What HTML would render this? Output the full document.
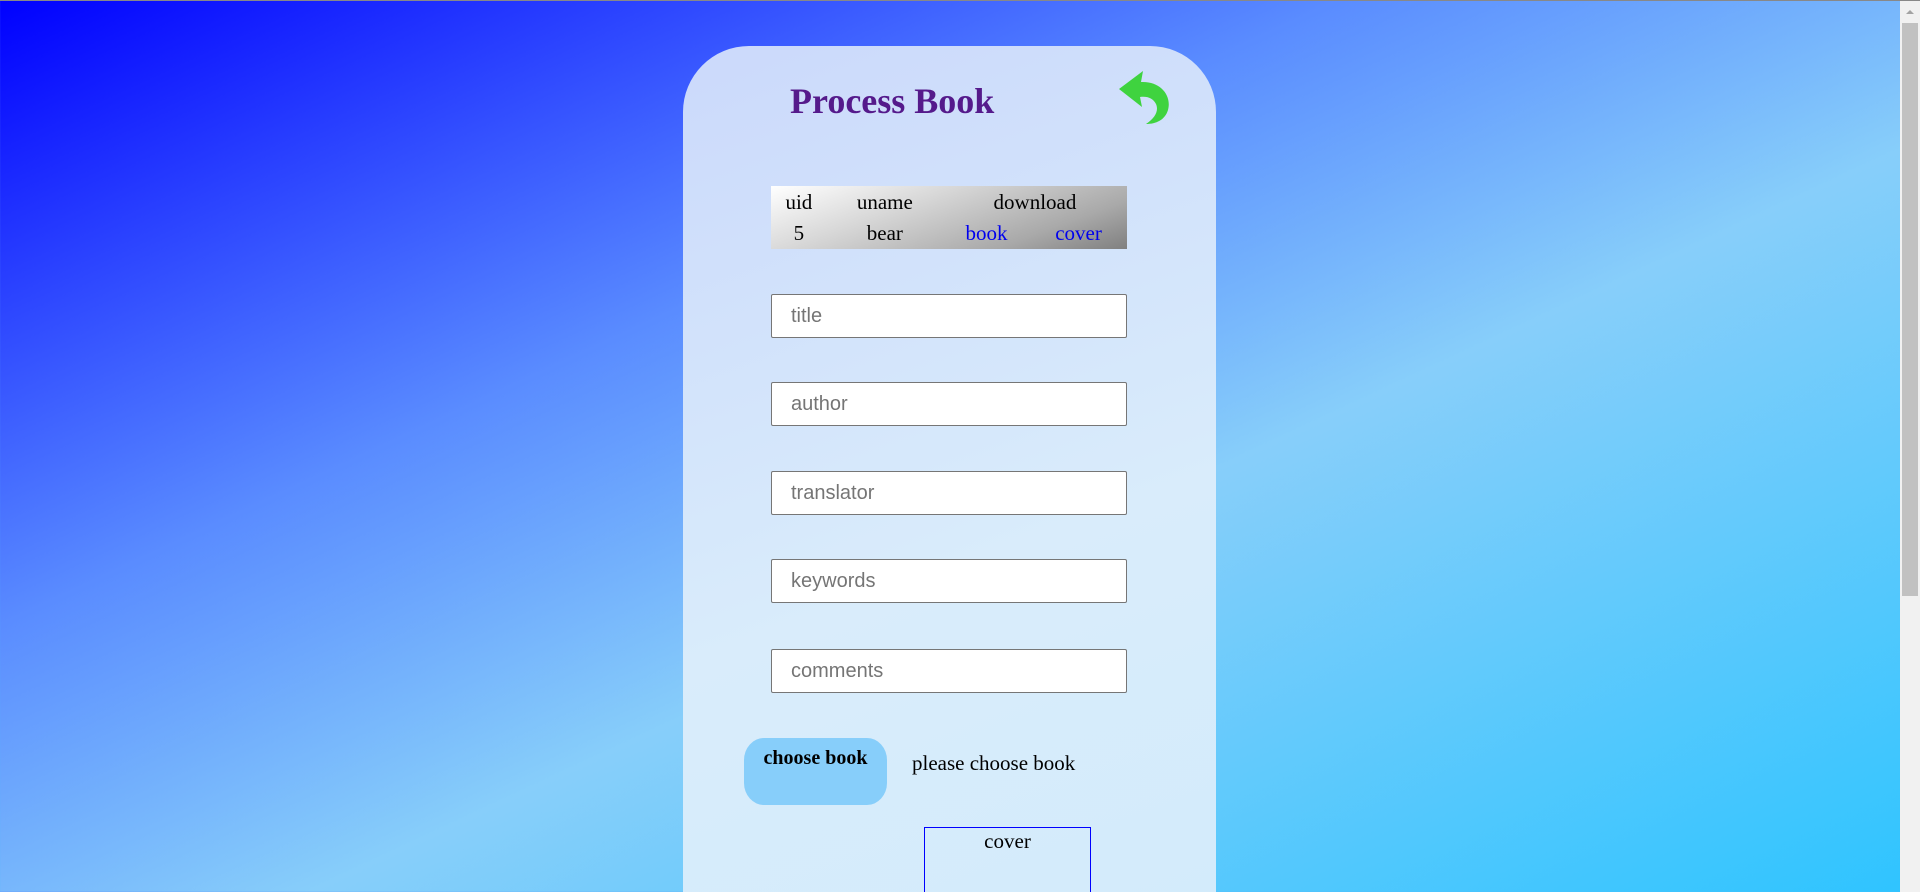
<!DOCTYPE html>
<html><head><style>
html,body{margin:0;padding:0;width:1920px;height:892px;overflow:hidden}
body{background:linear-gradient(155deg,#0000ff 0%,#5a8cff 35%,#87cefa 58%,#2ec4ff 100%);position:relative;font-family:"Liberation Serif",serif;border-top:1px solid #888;box-sizing:border-box}
.card{position:absolute;left:683px;top:45px;width:533px;height:846px;border-radius:66px 66px 0 0;background:linear-gradient(160deg,#cbd9fb 0%,#d9ecfb 60%,#d3ebfb 100%)}
h1{position:absolute;left:790px;top:78px;margin:0;font-size:36px;font-weight:bold;color:#551a8b;line-height:44px}
table{position:absolute;left:771px;top:185px;width:356px;height:63px;border-collapse:collapse;background:linear-gradient(160deg,#fff 0%,#d8d8d8 35%,#a9a9a9 75%,#808080 100%);font-size:21px;text-align:center}
td{padding:0;line-height:30px}
a{color:#0000ee;text-decoration:none}
input{position:absolute;left:771px;width:356px;height:44px;box-sizing:border-box;border:1px solid #767676;border-radius:2px;background:#fff;font-family:"Liberation Sans",sans-serif;font-size:20px;padding:0 19px;color:#757575;line-height:42px}
.btn{position:absolute;left:744px;top:737px;width:143px;height:67px;background:#87cefa;border-radius:20px/22px;font-weight:bold;font-size:20px;text-align:center;line-height:22px;padding-top:9px;box-sizing:border-box}
.msg{position:absolute;left:912px;top:750px;font-size:21px}
.cover{position:absolute;left:924px;top:826px;width:167px;height:66px;border:1px solid #0000ff;border-bottom:none;box-sizing:border-box;text-align:center;font-size:21px;line-height:26px}
.sb{position:absolute;right:0;top:0;width:20px;height:892px;background:#f1f1f1}
.th{position:absolute;left:2px;top:22px;width:16px;height:573px;background:#c1c1c1}
.ar{position:absolute;left:6px;top:9px;width:0;height:0;border-left:4px solid transparent;border-right:4px solid transparent;border-bottom:4px solid #a3a3a3}
</style></head><body>
<div class="card"></div>
<h1>Process Book</h1>
<svg style="position:absolute;left:1112px;top:66px" width="62" height="62" viewBox="0 0 62 62">
<path d="M7 22 L31 4 L29 15 C48 14 60 28 56 43 C53 53 44 57 34 57 C43 51 47 44 44 37 C41 31 35 29 28 30 L30 40 Z" fill="#3fd33f"/>
</svg>
<table>
<tr><td>uid</td><td>uname</td><td colspan="2">download</td></tr>
<tr><td>5</td><td>bear</td><td><a>book</a></td><td><a>cover</a></td></tr>
</table>
<input style="top:293px" placeholder="title">
<input style="top:381px" placeholder="author">
<input style="top:470px" placeholder="translator">
<input style="top:558px" placeholder="keywords">
<input style="top:648px" placeholder="comments">
<div class="btn">choose book</div>
<div class="msg">please choose book</div>
<div class="cover">cover</div>
<div class="sb"><div class="ar"></div><div class="th"></div></div>
</body></html>
